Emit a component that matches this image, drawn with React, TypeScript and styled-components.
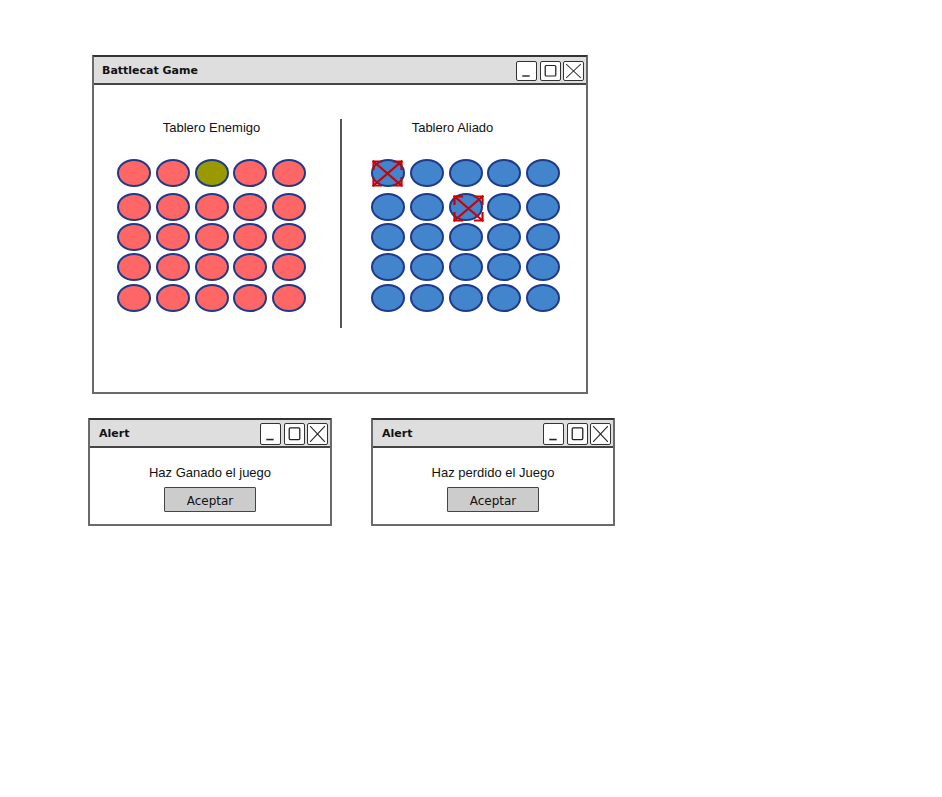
import React from "react"
import styled, { createGlobalStyle } from "styled-components"

const GlobalStyle = createGlobalStyle`
  body {
    margin: 0;
    background: #ffffff;
    font-family: "Liberation Sans", Arial, sans-serif;
  }
`

const SKETCH_FONT = `"Comic Sans MS", "DejaVu Sans", sans-serif`

type Dot = { color: "red" | "olive" | "blue"; hit?: { dx: number; dy: number } }

const enemy: Dot[][] = [0, 1, 2, 3, 4].map((r) =>
  [0, 1, 2, 3, 4].map((c) => ({ color: r === 0 && c === 2 ? "olive" : "red" }))
)

const ally: Dot[][] = [0, 1, 2, 3, 4].map((r) =>
  [0, 1, 2, 3, 4].map((c) => {
    if (r === 0 && c === 0) return { color: "blue", hit: { dx: -1, dy: -1 } }
    if (r === 1 && c === 2) return { color: "blue", hit: { dx: 2, dy: 0 } }
    return { color: "blue" }
  })
)

const fills = { red: "#ff6666", olive: "#999900", blue: "#4285cd" }

const WindowControls = ({ height }: { height: number }) => (
  <Controls>
    <ControlBox $h={height}>
      <svg viewBox="0 0 18 18" preserveAspectRatio="none">
        <line x1="5" y1="14" x2="12" y2="14" stroke="#222" strokeWidth="1.4" />
      </svg>
    </ControlBox>
    <ControlBox $h={height}>
      <svg viewBox="0 0 18 18" preserveAspectRatio="none">
        <rect x="4" y="3.5" width="10" height="10.5" rx="1" fill="none" stroke="#222" strokeWidth="1.2" />
      </svg>
    </ControlBox>
    <ControlBox $h={height}>
      <svg viewBox="0 0 18 18" preserveAspectRatio="none">
        <line x1="2" y1="2" x2="16" y2="16" stroke="#222" strokeWidth="1" />
        <line x1="16" y1="2" x2="2" y2="16" stroke="#222" strokeWidth="1" />
      </svg>
    </ControlBox>
  </Controls>
)

const HitMark = ({ dx, dy }: { dx: number; dy: number }) => (
  <Hit $dx={dx} $dy={dy} viewBox="0 0 31 27">
    <g stroke="#cc0000" strokeWidth="2.2" fill="none" strokeLinecap="square">
      <line x1="1.5" y1="1.5" x2="29.5" y2="25.5" />
      <line x1="29.5" y1="1.5" x2="1.5" y2="25.5" />
      <path d="M1.5 9 L1.5 1.5 L9 1.5" />
      <path d="M22 1.5 L29.5 1.5 L29.5 9" />
      <path d="M1.5 18 L1.5 25.5 L9 25.5" />
      <path d="M22 25.5 L29.5 25.5 L29.5 18" />
    </g>
  </Hit>
)

const Board = ({ title, dots, shift }: { title: string; dots: Dot[][]; shift: number }) => (
  <BoardPanel>
    <BoardTitle $shift={shift}>{title}</BoardTitle>
    <Grid>
      {dots.flat().map((d, i) => (
        <Cell key={i} $fill={fills[d.color]}>
          {d.hit && <HitMark dx={d.hit.dx} dy={d.hit.dy} />}
        </Cell>
      ))}
    </Grid>
  </BoardPanel>
)

const Alert = ({ message }: { message: string }) => (
  <Window $w={244} $h={108}>
    <TitleBar $pad={9}>
      <WindowTitle>Alert</WindowTitle>
      <WindowControls height={22} />
    </TitleBar>
    <AlertBody>
      <Message>{message}</Message>
      <Button>Aceptar</Button>
    </AlertBody>
  </Window>
)

const App = () => {
  return (
    <>
      <GlobalStyle />
      <Page>
        <MainWindow $w={496} $h={339}>
          <TitleBar $pad={8}>
            <WindowTitle>Battlecat Game</WindowTitle>
            <WindowControls height={20} />
          </TitleBar>
          <GameArea>
            <Board title="Tablero Enemigo" dots={enemy} shift={0} />
            <Divider />
            <Board title="Tablero Aliado" dots={ally} shift={26} />
          </GameArea>
        </MainWindow>
        <AlertRow>
          <Alert message="Haz Ganado el juego" />
          <Alert message="Haz perdido el Juego" />
        </AlertRow>
      </Page>
    </>
  )
}

export default App

const Page = styled.div`
  display: flex;
  flex-direction: column;
  align-items: flex-start;
  padding: 55px 0 0 88px;
  min-height: 797px;
  box-sizing: border-box;
`

const Window = styled.div<{ $w: number; $h: number }>`
  box-sizing: border-box;
  width: ${(p) => p.$w}px;
  height: ${(p) => p.$h}px;
  display: flex;
  flex-direction: column;
  background: #ffffff;
  border: 2px solid #6a6a6a;
  border-top-color: #333333;
  border-radius: 1px;
`

const MainWindow = styled(Window)`
  margin-left: 4px;
`

const TitleBar = styled.div<{ $pad: number }>`
  box-sizing: border-box;
  height: 28px;
  flex-shrink: 0;
  display: flex;
  align-items: center;
  padding: 1px 2px 0 ${(p) => p.$pad}px;
  background: #dedede;
  border-bottom: 2px solid #444444;
`

const WindowTitle = styled.span`
  font-family: ${SKETCH_FONT};
  font-weight: bold;
  font-size: 11px;
  color: #111111;
`

const Controls = styled.div`
  margin-left: auto;
  display: flex;
  gap: 2.5px;
`

const ControlBox = styled.div<{ $h: number }>`
  box-sizing: border-box;
  width: 21px;
  height: ${(p) => p.$h}px;
  border: 1.5px solid #333333;
  border-radius: 2px;
  background: #ffffff;
  display: flex;

  svg {
    width: 100%;
    height: 100%;
  }
`

const GameArea = styled.div`
  display: flex;
  align-items: flex-start;
  padding: 34px 0 0 23px;
`

const BoardPanel = styled.div`
  width: 189px;
  display: flex;
  flex-direction: column;
  align-items: center;
`

const BoardTitle = styled.div<{ $shift: number }>`
  font-size: 13px;
  line-height: 18px;
  color: #111111;
  margin-right: ${(p) => p.$shift}px;
`

const Grid = styled.div`
  margin-top: 22px;
  display: grid;
  grid-template-columns: repeat(5, 34px);
  grid-template-rows: 34px 30px 30px 31px 28px;
  column-gap: 4.75px;
`

const Cell = styled.div<{ $fill: string }>`
  position: relative;
  box-sizing: border-box;
  width: 34px;
  height: 28px;
  border: 2px solid #1f3a8a;
  border-radius: 50%;
  background: ${(p) => p.$fill};
`

const Hit = styled.svg<{ $dx: number; $dy: number }>`
  position: absolute;
  left: ${(p) => p.$dx}px;
  top: ${(p) => p.$dy}px;
  width: 31px;
  height: 27px;
  overflow: visible;
`

const Divider = styled.div`
  width: 2px;
  height: 209px;
  background: #555555;
  margin: 0 29px 0 34px;
  flex-shrink: 0;
`

const AlertRow = styled.div`
  display: flex;
  gap: 39px;
  margin-top: 24px;
`

const AlertBody = styled.div`
  display: flex;
  flex-direction: column;
  align-items: center;
  padding-top: 16px;
`

const Message = styled.div`
  font-size: 13px;
  line-height: 18px;
  color: #111111;
`

const Button = styled.button`
  box-sizing: border-box;
  width: 92px;
  height: 25px;
  margin-top: 5px;
  padding: 2px 0 0;
  background: #cccccc;
  border: 1.5px solid #444444;
  border-radius: 1px;
  font-family: ${SKETCH_FONT};
  font-size: 12px;
  color: #111111;
`
